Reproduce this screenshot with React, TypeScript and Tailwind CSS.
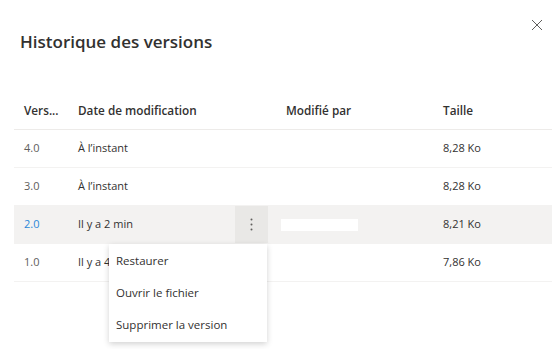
const rows = [
  { version: '4.0', date: 'À l’instant', size: '8,28 Ko' },
  { version: '3.0', date: 'À l’instant', size: '8,28 Ko' },
  { version: '2.0', date: 'Il y a 2 min', size: '8,21 Ko', active: true },
  { version: '1.0', date: 'Il y a 4 min', size: '7,86 Ko' },
]

const menu = ['Restaurer', 'Ouvrir le fichier', 'Supprimer la version']

export default function App() {
  return (
    <div
      className="relative w-[560px] h-[349px] overflow-hidden bg-white text-[#323130]"
      style={{ fontFamily: '"Open Sans", "Noto Sans", sans-serif' }}
    >
      {/* close */}
      <button className="absolute right-[16px] top-[18px] w-[14px] h-[14px] flex items-center justify-center text-[#605e5c]">
        <svg width="12" height="12" viewBox="0 0 12 12" fill="none" stroke="currentColor" strokeWidth="1">
          <path d="M1 1L11 11M11 1L1 11" />
        </svg>
      </button>

      <div className="pl-[20px] pt-[30px] h-[92px]">
        <h1 className="text-[17px] leading-[24px] font-semibold">Historique des versions</h1>
      </div>

      <div className="ml-[14px] w-[538px]">
        <div className="grid grid-cols-[64px_190px_175px_109px] h-[38px] items-center border-b border-[#edebe9] text-[11.75px] font-semibold">
          <div className="pl-[10px]">Vers...</div>
          <div>Date de modification</div>
          <div className="pl-[18px]">Modifié par</div>
          <div>Taille</div>
        </div>

        {rows.map((r) => (
          <div
            key={r.version}
            className={`grid grid-cols-[64px_190px_175px_109px] h-[38px] items-center border-b border-[#f3f2f1] text-[11px] text-[#605e5c] ${
              r.active ? 'bg-[#f3f2f1]' : 'bg-white'
            }`}
          >
            <div className={`pl-[10px] ${r.active ? 'text-[#2b88d8]' : ''}`}>{r.version}</div>
            <div className="flex items-center h-full text-[#323130]">
              <span className="flex-1">{r.date}</span>
              {r.active && (
                <div className="w-[33px] h-full bg-[#e9e8e6] flex items-center justify-center">
                  <svg width="3" height="13" viewBox="0 0 3 13" fill="#605e5c">
                    <circle cx="1.5" cy="1.5" r="1" />
                    <circle cx="1.5" cy="6.5" r="1" />
                    <circle cx="1.5" cy="11.5" r="1" />
                  </svg>
                </div>
              )}
            </div>
            <div className="pl-[18px]">
              {r.active && <div className="ml-[-5px] w-[77px] h-[12px] bg-white" />}
            </div>
            <div className="text-[#323130]">{r.size}</div>
          </div>
        ))}
      </div>

      {/* context menu */}
      <div className="absolute left-[109px] top-[244px] w-[158px] bg-white py-[1px] shadow-[0_2px_6px_rgba(0,0,0,0.18)]">
        {menu.map((m) => (
          <div key={m} className="h-[32px] flex items-center pl-[7px] text-[11.5px] text-[#323130]">
            {m}
          </div>
        ))}
      </div>
    </div>
  )
}
